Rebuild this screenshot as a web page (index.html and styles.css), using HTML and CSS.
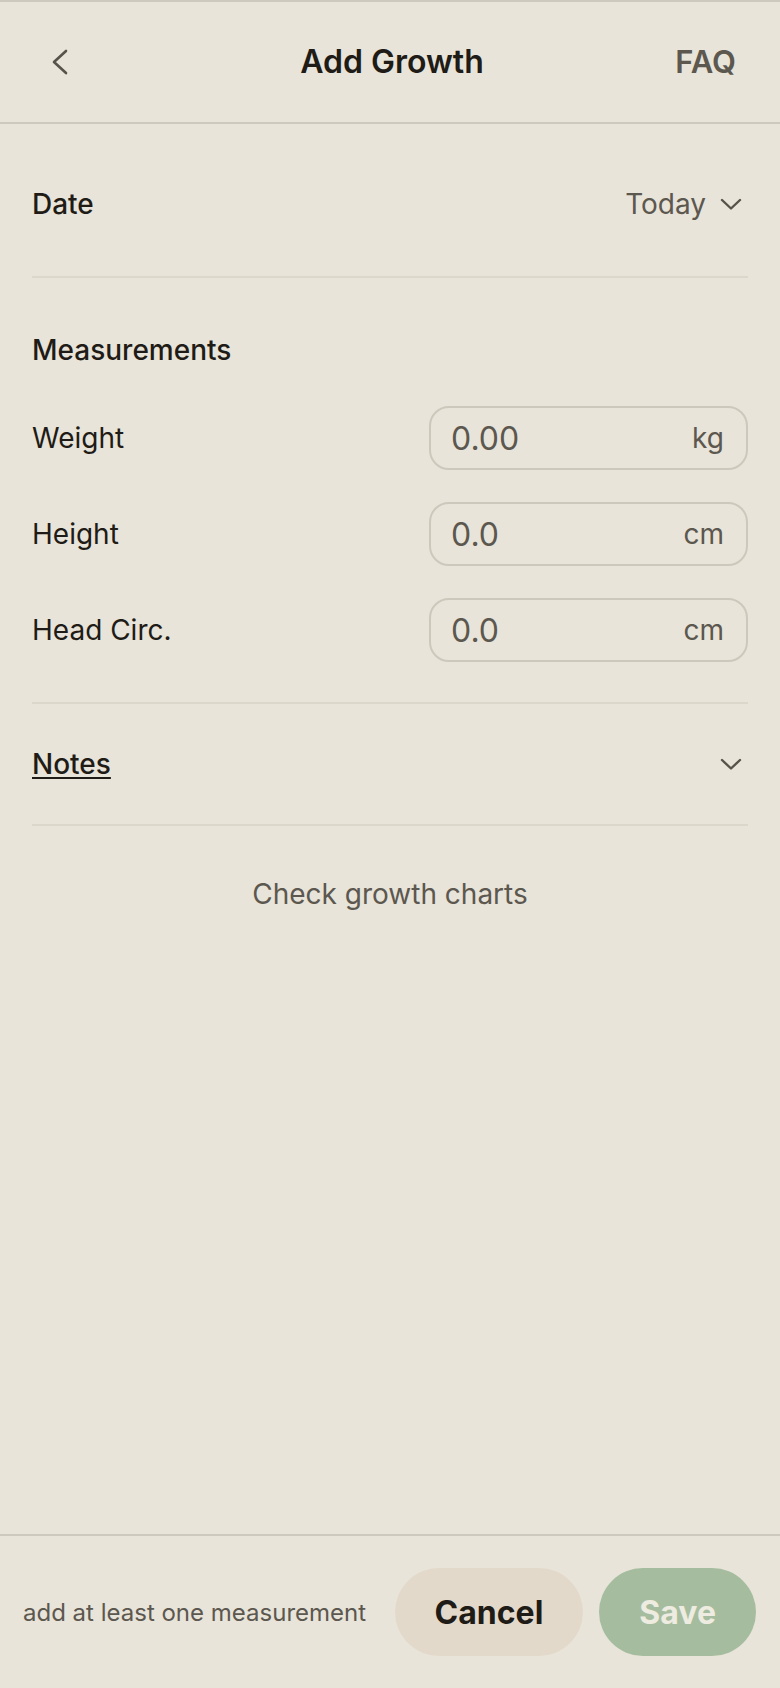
FILE: index.html
```html
<!DOCTYPE html>
<html lang="en">
<head>
<meta charset="utf-8">
<meta name="viewport" content="width=device-width, initial-scale=1">
<title>Add Growth</title>
<link rel="stylesheet" href="styles.css">
</head>
<body>
<div class="screen">
  <header class="topbar">
    <button class="back-btn" type="button" aria-label="Back">
      <svg width="16" height="26" viewBox="0 0 16 26" aria-hidden="true">
        <polyline points="14,2 2,13 14,24" fill="none" stroke="currentColor" stroke-width="2.6" stroke-linecap="round" stroke-linejoin="round"/>
      </svg>
    </button>
    <h1 class="topbar-title">Add Growth</h1>
    <button class="faq-btn" type="button">FAQ</button>
  </header>

  <main class="content">
    <section class="row-section date-section">
      <span class="section-label">Date</span>
      <button class="picker" type="button">
        <span>Today</span>
        <svg class="chev" width="22" height="12" viewBox="0 0 22 12" aria-hidden="true">
          <polyline points="2,2 11,10.5 20,2" fill="none" stroke="currentColor" stroke-width="2.4" stroke-linecap="round" stroke-linejoin="round"/>
        </svg>
      </button>
    </section>

    <section class="measure-section">
      <h2 class="section-label measure-title">Measurements</h2>
      <div class="measure-list">
        <div class="measure-row">
          <label class="measure-label" for="weight">Weight</label>
          <div class="field">
            <input id="weight" class="field-input" type="text" inputmode="decimal" placeholder="0.00">
            <span class="field-unit">kg</span>
          </div>
        </div>
        <div class="measure-row">
          <label class="measure-label" for="height">Height</label>
          <div class="field">
            <input id="height" class="field-input" type="text" inputmode="decimal" placeholder="0.0">
            <span class="field-unit">cm</span>
          </div>
        </div>
        <div class="measure-row">
          <label class="measure-label" for="head">Head Circ.</label>
          <div class="field">
            <input id="head" class="field-input" type="text" inputmode="decimal" placeholder="0.0">
            <span class="field-unit">cm</span>
          </div>
        </div>
      </div>
    </section>

    <section class="row-section notes-section">
      <span class="section-label notes-label">Notes</span>
      <svg class="chev" width="22" height="12" viewBox="0 0 22 12" aria-hidden="true">
        <polyline points="2,2 11,10.5 20,2" fill="none" stroke="currentColor" stroke-width="2.4" stroke-linecap="round" stroke-linejoin="round"/>
      </svg>
    </section>

    <a class="charts-link" href="#">Check growth charts</a>
  </main>

  <footer class="actionbar">
    <span class="hint">add at least one measurement</span>
    <div class="actions">
      <button class="btn btn-cancel" type="button">Cancel</button>
      <button class="btn btn-save" type="button" disabled>Save</button>
    </div>
  </footer>
</div>
</body>
</html>
```

FILE: styles.css
```css
* {
  box-sizing: border-box;
}

html,
body {
  margin: 0;
  padding: 0;
  height: 100%;
}

body {
  background: #e8e4d9;
  color: #1f1b16;
  font-family: "Inter", "Noto Sans", "Liberation Sans", sans-serif;
}

button {
  font-family: inherit;
  background: none;
  border: 0;
  padding: 0;
  margin: 0;
  cursor: pointer;
}

.screen {
  display: flex;
  flex-direction: column;
  height: 100vh;
}

/* top navigation bar */
.topbar {
  display: grid;
  grid-template-columns: 1fr auto 1fr;
  align-items: center;
  height: 124px;
  border-top: 2px solid #cdc9be;
  border-bottom: 2px solid #cdc9be;
  padding: 0 44px 0 52px;
  flex: none;
}

.back-btn {
  justify-self: start;
  display: flex;
  color: #57524a;
}

.topbar-title {
  margin: 0;
  font-size: 32px;
  font-weight: 600;
  line-height: 40px;
  color: #1f1b16;
  transform: translateX(-2px);
}

.faq-btn {
  justify-self: end;
  font-size: 31px;
  font-weight: 600;
  line-height: 40px;
  color: #5c574f;
}

/* form body */
.content {
  flex: 1;
  padding: 0 32px;
  display: flex;
  flex-direction: column;
}

.row-section {
  display: flex;
  align-items: center;
  justify-content: space-between;
  line-height: 36px;
  border-bottom: 2px solid #dcd7cb;
}

.section-label {
  font-size: 28px;
  font-weight: 500;
  line-height: 36px;
  color: #1f1b16;
}

.date-section {
  padding: 62px 0 54px;
}

.picker {
  display: flex;
  align-items: center;
  gap: 14px;
  font-size: 28px;
  line-height: 36px;
  color: #5c574f;
  padding-right: 6px;
}

.chev {
  display: block;
  color: #57524a;
}

.measure-section {
  padding: 54px 0 40px;
  border-bottom: 2px solid #dcd7cb;
}

.measure-title {
  margin: 0;
  display: block;
}

.measure-list {
  display: flex;
  flex-direction: column;
  gap: 32px;
  margin-top: 38px;
}

.measure-row {
  display: flex;
  align-items: center;
  justify-content: space-between;
}

.measure-label {
  font-size: 28px;
  line-height: 36px;
  color: #1f1b16;
}

.field {
  width: 319px;
  height: 64px;
  display: flex;
  align-items: center;
  border: 2px solid #cdc8bc;
  border-radius: 20px;
  padding: 0 22px 0 20px;
}

.field-input {
  flex: 1;
  min-width: 0;
  border: 0;
  background: transparent;
  outline: none;
  padding: 0;
  font-family: inherit;
  font-size: 32px;
  color: #1f1b16;
}

.field-input::placeholder {
  color: #5c574f;
  opacity: 1;
}

.field-unit {
  font-size: 28px;
  color: #5c574f;
}

.notes-section {
  padding: 42px 6px 42px 0;
}

.notes-label {
  text-decoration: underline;
  text-decoration-thickness: 2px;
  text-underline-offset: 3px;
}

.charts-link {
  align-self: center;
  margin-top: 50px;
  font-size: 28px;
  line-height: 36px;
  color: #5c574f;
  text-decoration: none;
}

/* bottom action bar */
.actionbar {
  flex: none;
  display: flex;
  align-items: center;
  justify-content: space-between;
  border-top: 2px solid #cdc9be;
  padding: 32px 24px 32px 23px;
}

.hint {
  font-size: 24px;
  color: #5c574f;
}

.actions {
  display: flex;
  gap: 16px;
}

.btn {
  height: 88px;
  padding: 0 40px;
  border-radius: 44px;
  font-size: 32px;
  font-weight: 700;
}

.btn-cancel {
  background: #e3d9cb;
  color: #1f1b16;
}

.btn-save {
  background: #a5bd9e;
  color: #eeebe0;
  cursor: default;
}
```
